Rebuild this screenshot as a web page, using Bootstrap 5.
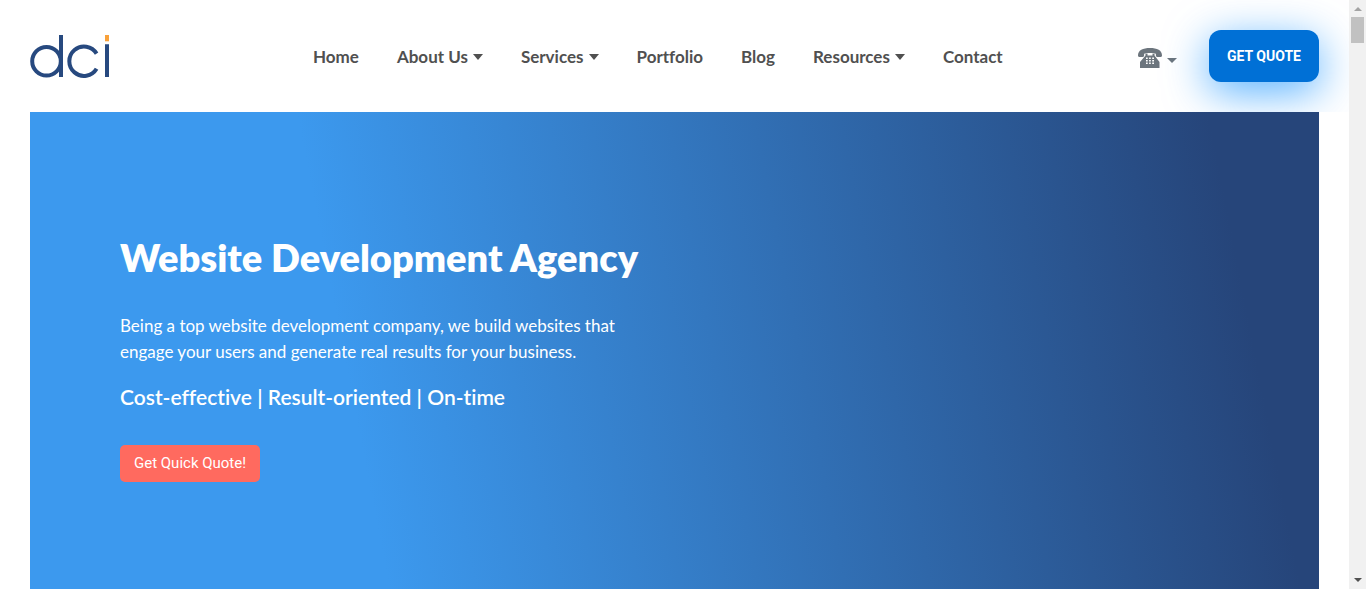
<!DOCTYPE html>
<html lang="en">
<head>
<meta charset="utf-8">
<meta name="viewport" content="width=device-width, initial-scale=1">
<title>Website Development Agency | DCI</title>
<link href="https://cdn.jsdelivr.net/npm/bootstrap@5.3.0/dist/css/bootstrap.min.css" rel="stylesheet">
<style>
  body { font-family: Lato, sans-serif; font-size: 17px; line-height: 26px; background: #fff; font-variant-ligatures: none; }
  .site-header { padding: 30px 30px; overflow: hidden; }
  .logo-link { flex: 0 0 264px; padding-top: 2px; }
  .logo-link svg { display: block; }
  .navbar .site-nav .nav-item .nav-link { color: #505050; font-weight: 700; padding: 14px 19px 12px; white-space: nowrap; }
  .site-nav .dropdown-toggle::after, .phone-btn::after { border-top-width: 6px; border-left-width: 5px; border-right-width: 5px; margin-left: 5px; vertical-align: 3px; }
  .phone-btn { color: #6c757d; padding: 4px 16px 0 0; }
  .phone-btn::after { margin: 4px 0 0 4px; border-top-width: 5px; }
  .quote-btn { width: 110px; height: 52px; border-radius: 12px; background: #0070d6; color: #fff; font: 700 14px/20px Roboto, sans-serif; box-shadow: 0 10px 44px #0088ffaa; }
  .hero { background: linear-gradient(79deg, #3c99ee 26%, #26457a 92%); margin: 0 30px; padding: 122px 90px 90px; }
  .hero h1 { font-size: 38px; line-height: 46px; font-weight: 800; margin-bottom: 33px; }
  .hero-intro { max-width: 520px; margin-bottom: 19px; }
  .hero-points { font-size: 21px; line-height: 26px; font-weight: 600; margin-bottom: 35px; }
  .quick-btn { background: #ff6a5f; color: #fff; border-radius: 5px; padding: 8px 14px; font: 400 15px/21px Roboto, sans-serif; }
  .scroll-rail { flex: 0 0 17px; background: #f1f1f1; height: 100vh; }
  .rail-thumb { width: 13px; height: 26px; background: #c1c1c1; }
</style>
</head>
<body>
<div class="d-flex vh-100 overflow-hidden">
  <div class="flex-grow-1 d-flex flex-column overflow-hidden">
    <header class="site-header navbar navbar-expand flex-nowrap">
      <a class="logo-link" href="#" aria-label="dci home">
        <svg width="80" height="44" viewBox="0 0 80 44" fill="none" stroke="#27497f" stroke-width="4">
          <circle cx="16.5" cy="26.200" r="14.300"/>
          <path d="M31 0v42M66.600 18.600a14.700 14.700 0 1 0 0 15.200M77 9.300V42"/>
          <path d="M77 0v6.300" stroke="#f9a13a"/>
        </svg>
      </a>
      <nav aria-label="Main">
        <ul class="navbar-nav site-nav">
          <li class="nav-item"><a class="nav-link" href="#">Home</a></li>
          <li class="nav-item dropdown"><a class="nav-link dropdown-toggle" href="#" data-bs-toggle="dropdown">About Us</a></li>
          <li class="nav-item dropdown"><a class="nav-link dropdown-toggle" href="#" data-bs-toggle="dropdown">Services</a></li>
          <li class="nav-item"><a class="nav-link" href="#">Portfolio</a></li>
          <li class="nav-item"><a class="nav-link" href="#">Blog</a></li>
          <li class="nav-item dropdown"><a class="nav-link dropdown-toggle" href="#" data-bs-toggle="dropdown">Resources</a></li>
          <li class="nav-item"><a class="nav-link" href="#">Contact</a></li>
        </ul>
      </nav>
      <div class="d-flex align-items-center ms-auto">
        <button type="button" class="phone-btn dropdown-toggle btn border-0 d-flex align-items-center me-3" aria-label="Call us">
          <svg width="26" height="22" viewBox="0 0 26 22" fill="currentColor" aria-hidden="true">
            <path d="M1 8.600C.8 3.200 6 1 13 1s12.200 2.200 12 7.600c0 .9-.4 1.300-1.200 1.300h-3.600c-.9 0-1.300-.4-1.300-1.300V6.700C16 5.600 10 5.600 7.100 6.700v1.900c0 .9-.4 1.300-1.300 1.300H2.200C1.400 9.900 1 9.500 1 8.600z"/>
            <path fill-rule="evenodd" d="M8.500 6.800h2v1.700h5V6.800h2v1.800l5 6.400v6H3v-6l5.500-6.400zM9 10.500v1.500h1.700v-1.500zm3.100 0v1.500h1.700v-1.500zm3.100 0v1.500H17v-1.500zM9 13v1.500h1.700V13zm3.100 0v1.500h1.700V13zm3.100 0v1.500H17V13zM9 15.500V17h1.700v-1.500zm3.100 0V17h1.700v-1.500zm3.100 0V17H17v-1.500z"/>
          </svg>
        </button>
        <button type="button" class="btn quote-btn border-0 p-0">GET QUOTE</button>
      </div>
    </header>
    <main class="hero flex-grow-1 text-white">
      <h1>Website Development Agency</h1>
      <p class="hero-intro">Being a top website development company, we build websites that engage your users and generate real results for your business.</p>
      <p class="hero-points">Cost-effective | Result-oriented | On-time</p>
      <button type="button" class="btn quick-btn border-0">Get Quick Quote!</button>
    </main>
  </div>
  <div class="scroll-rail d-flex flex-column align-items-center" aria-hidden="true">
    <svg width="17" height="17" fill="#a3a3a3"><path d="M5 11h8L9 7z"/></svg>
    <div class="rail-thumb"></div>
    <svg class="mt-auto" width="17" height="17" fill="#505050"><path d="M5 6h8l-4 4z"/></svg>
  </div>
</div>
<script src="https://cdn.jsdelivr.net/npm/bootstrap@5.3.0/dist/js/bootstrap.bundle.min.js"></script>
</body>
</html>
